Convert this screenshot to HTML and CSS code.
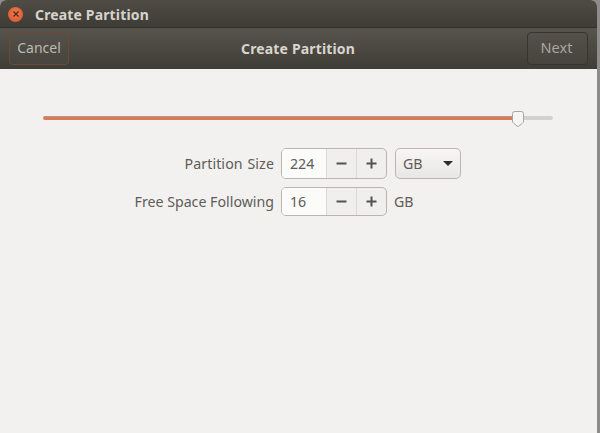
FILE: index.html
```html
<!DOCTYPE html>
<html lang="en">
<head>
<meta charset="utf-8">
<title>Create Partition</title>
<link rel="stylesheet" href="styles.css">
</head>
<body>
<div class="window">
  <div class="titlebar">
    <span class="close"><svg width="8" height="8" viewBox="0 0 8 8"><path d="M1.500 1.500l5 5M6.500 1.500l-5 5" stroke="#4a2a1c" stroke-width="1.200" fill="none"/></svg></span>
    <span class="title">Create Partition</span>
  </div>
  <div class="headerbar">
    <button class="hbtn cancel">Cancel</button>
    <span class="htitle">Create Partition</span>
    <button class="hbtn next">Next</button>
  </div>
  <div class="content">
    <div class="slider">
      <div class="fill"></div>
      <div class="rest"></div>
      <svg class="thumb" width="14" height="18" viewBox="0 0 14 18"><path d="M3.500 1.500h7a2 2 0 0 1 2 2v7.500q0 1.500-1.500 2.500l-3 2.500q-1 .8-2 0l-3-2.500q-1.500-1-1.500-2.500v-7.500a2 2 0 0 1 2-2z" fill="#f6f5f4" stroke="#a9a6a1"/></svg>
    </div>
    <div class="form">
      <div class="row">
        <span class="label">Partition Size</span>
        <div class="spin">
          <span class="value">224</span>
          <span class="step"><svg width="11" height="11" viewBox="0 0 11 11"><path d="M0.500 5.500h10" class="sign"/></svg></span>
          <span class="step"><svg width="11" height="11" viewBox="0 0 11 11"><path d="M0.500 5.500h10M5.500 0.500v10" class="sign"/></svg></span>
        </div>
        <div class="combo"><span>GB</span><i class="arrow"></i></div>
      </div>
      <div class="row second">
        <span class="label">Free Space Following</span>
        <div class="spin short">
          <span class="value">16</span>
          <span class="step"><svg width="11" height="11" viewBox="0 0 11 11"><path d="M0.500 5.500h10" class="sign"/></svg></span>
          <span class="step"><svg width="11" height="11" viewBox="0 0 11 11"><path d="M0.500 5.500h10M5.500 0.500v10" class="sign"/></svg></span>
        </div>
        <span class="unit">GB</span>
      </div>
    </div>
  </div>
</div>
</body>
</html>
```

FILE: styles.css
```css
html, body {
  margin: 0;
  padding: 0;
  width: 600px;
  height: 433px;
  overflow: hidden;
  background: #8d8c8a;
  font-family: "Noto Sans", "Open Sans", sans-serif;
}
.window {
  width: 597px;
  height: 433px;
  display: flex;
  flex-direction: column;
  background: #f2f1ef;
  border-radius: 6px 6px 0 0;
  overflow: hidden;
}
.titlebar {
  height: 28px;
  flex: none;
  box-sizing: border-box;
  display: flex;
  align-items: center;
  padding: 1px 0 0 8px;
  background: linear-gradient(#4f4c45, #3e3c36);
  border-bottom: 1px solid #33312c;
}
.close {
  width: 15px;
  height: 15px;
  border-radius: 50%;
  background: radial-gradient(circle at 50% 40%, #ee7a4f, #d9512c);
  display: flex;
  align-items: center;
  justify-content: center;
  margin-right: 12px;
}
.title {
  font-size: 14px;
  font-weight: 700;
  color: #d6d3cd;
  letter-spacing: 0.15px;
}
.headerbar {
  height: 41px;
  flex: none;
  box-sizing: border-box;
  display: flex;
  align-items: center;
  justify-content: space-between;
  padding: 3px 9px 4px;
  background: linear-gradient(#57544d, #3f3d37);
}
.htitle {
  font-size: 14px;
  font-weight: 700;
  color: #d8d5cf;
  letter-spacing: 0.15px;
}
.hbtn {
  width: 60px;
  height: 33px;
  padding: 0 0 2px;
  border-radius: 4px;
  font: 14px "Noto Sans", "Open Sans", sans-serif;
  color: #bdbab4;
  background: linear-gradient(#54514a, #47443e);
}
.cancel {
  border: 1px solid #6d4a38;
}
.next {
  width: 61px;
  padding-right: 2px;
  border: 1px solid #37352f;
  color: #a9a6a0;
  font-size: 14.500px;
}
.content {
  flex: 1;
  display: flex;
  flex-direction: column;
}
.slider {
  position: relative;
  display: flex;
  align-items: center;
  height: 4px;
  margin: 47px 44px 0 43px;
}
.fill {
  width: 474px;
  height: 4px;
  box-sizing: border-box;
  background: #dd7a55;
  border-top: 1px solid #a89a90;
  border-radius: 2px 0 0 2px;
}
.rest {
  flex: 1;
  height: 4px;
  background: #d3d1cd;
  border-radius: 0 2px 2px 0;
}
.thumb {
  position: absolute;
  left: 468px;
  top: -6px;
}
.form {
  display: flex;
  flex-direction: column;
  margin-top: 28px;
}
.row {
  display: flex;
  align-items: center;
  height: 31px;
  font-size: 14.200px;
  color: #5e5c58;
}
.row.second {
  margin-top: 8px;
  height: 29px;
}
.label {
  width: 274px;
  text-align: right;
  margin-right: 7px;
  white-space: nowrap;
}
.row:first-child .label {
  word-spacing: 1px;
  letter-spacing: 0.1px;
}
.spin {
  width: 106px;
  height: 31px;
  box-sizing: border-box;
  display: flex;
  border: 1px solid #b9b6b0;
  border-radius: 5px;
  background: #f0efed;
  overflow: hidden;
}
.spin.short {
  height: 29px;
}
.value {
  width: 44px;
  box-sizing: border-box;
  padding-left: 8px;
  background: #fbfbfa;
  display: flex;
  align-items: center;
}
.step {
  width: 29px;
  flex: 1;
  box-sizing: border-box;
  border-left: 1px solid #dcdad6;
  display: flex;
  align-items: center;
  justify-content: center;
}
.sign {
  stroke: #55534f;
  stroke-width: 2;
  fill: none;
}
.combo {
  width: 66px;
  height: 31px;
  box-sizing: border-box;
  margin-left: 8px;
  padding: 0 7px;
  display: flex;
  align-items: center;
  justify-content: space-between;
  border: 1px solid #b9b6b0;
  border-radius: 5px;
  background: linear-gradient(#f7f6f5, #e9e7e4);
}
.arrow {
  width: 0;
  height: 0;
  border-left: 5px solid transparent;
  border-right: 5px solid transparent;
  border-top: 5px solid #2e2d2b;
}
.unit {
  margin-left: 7px;
}
```
